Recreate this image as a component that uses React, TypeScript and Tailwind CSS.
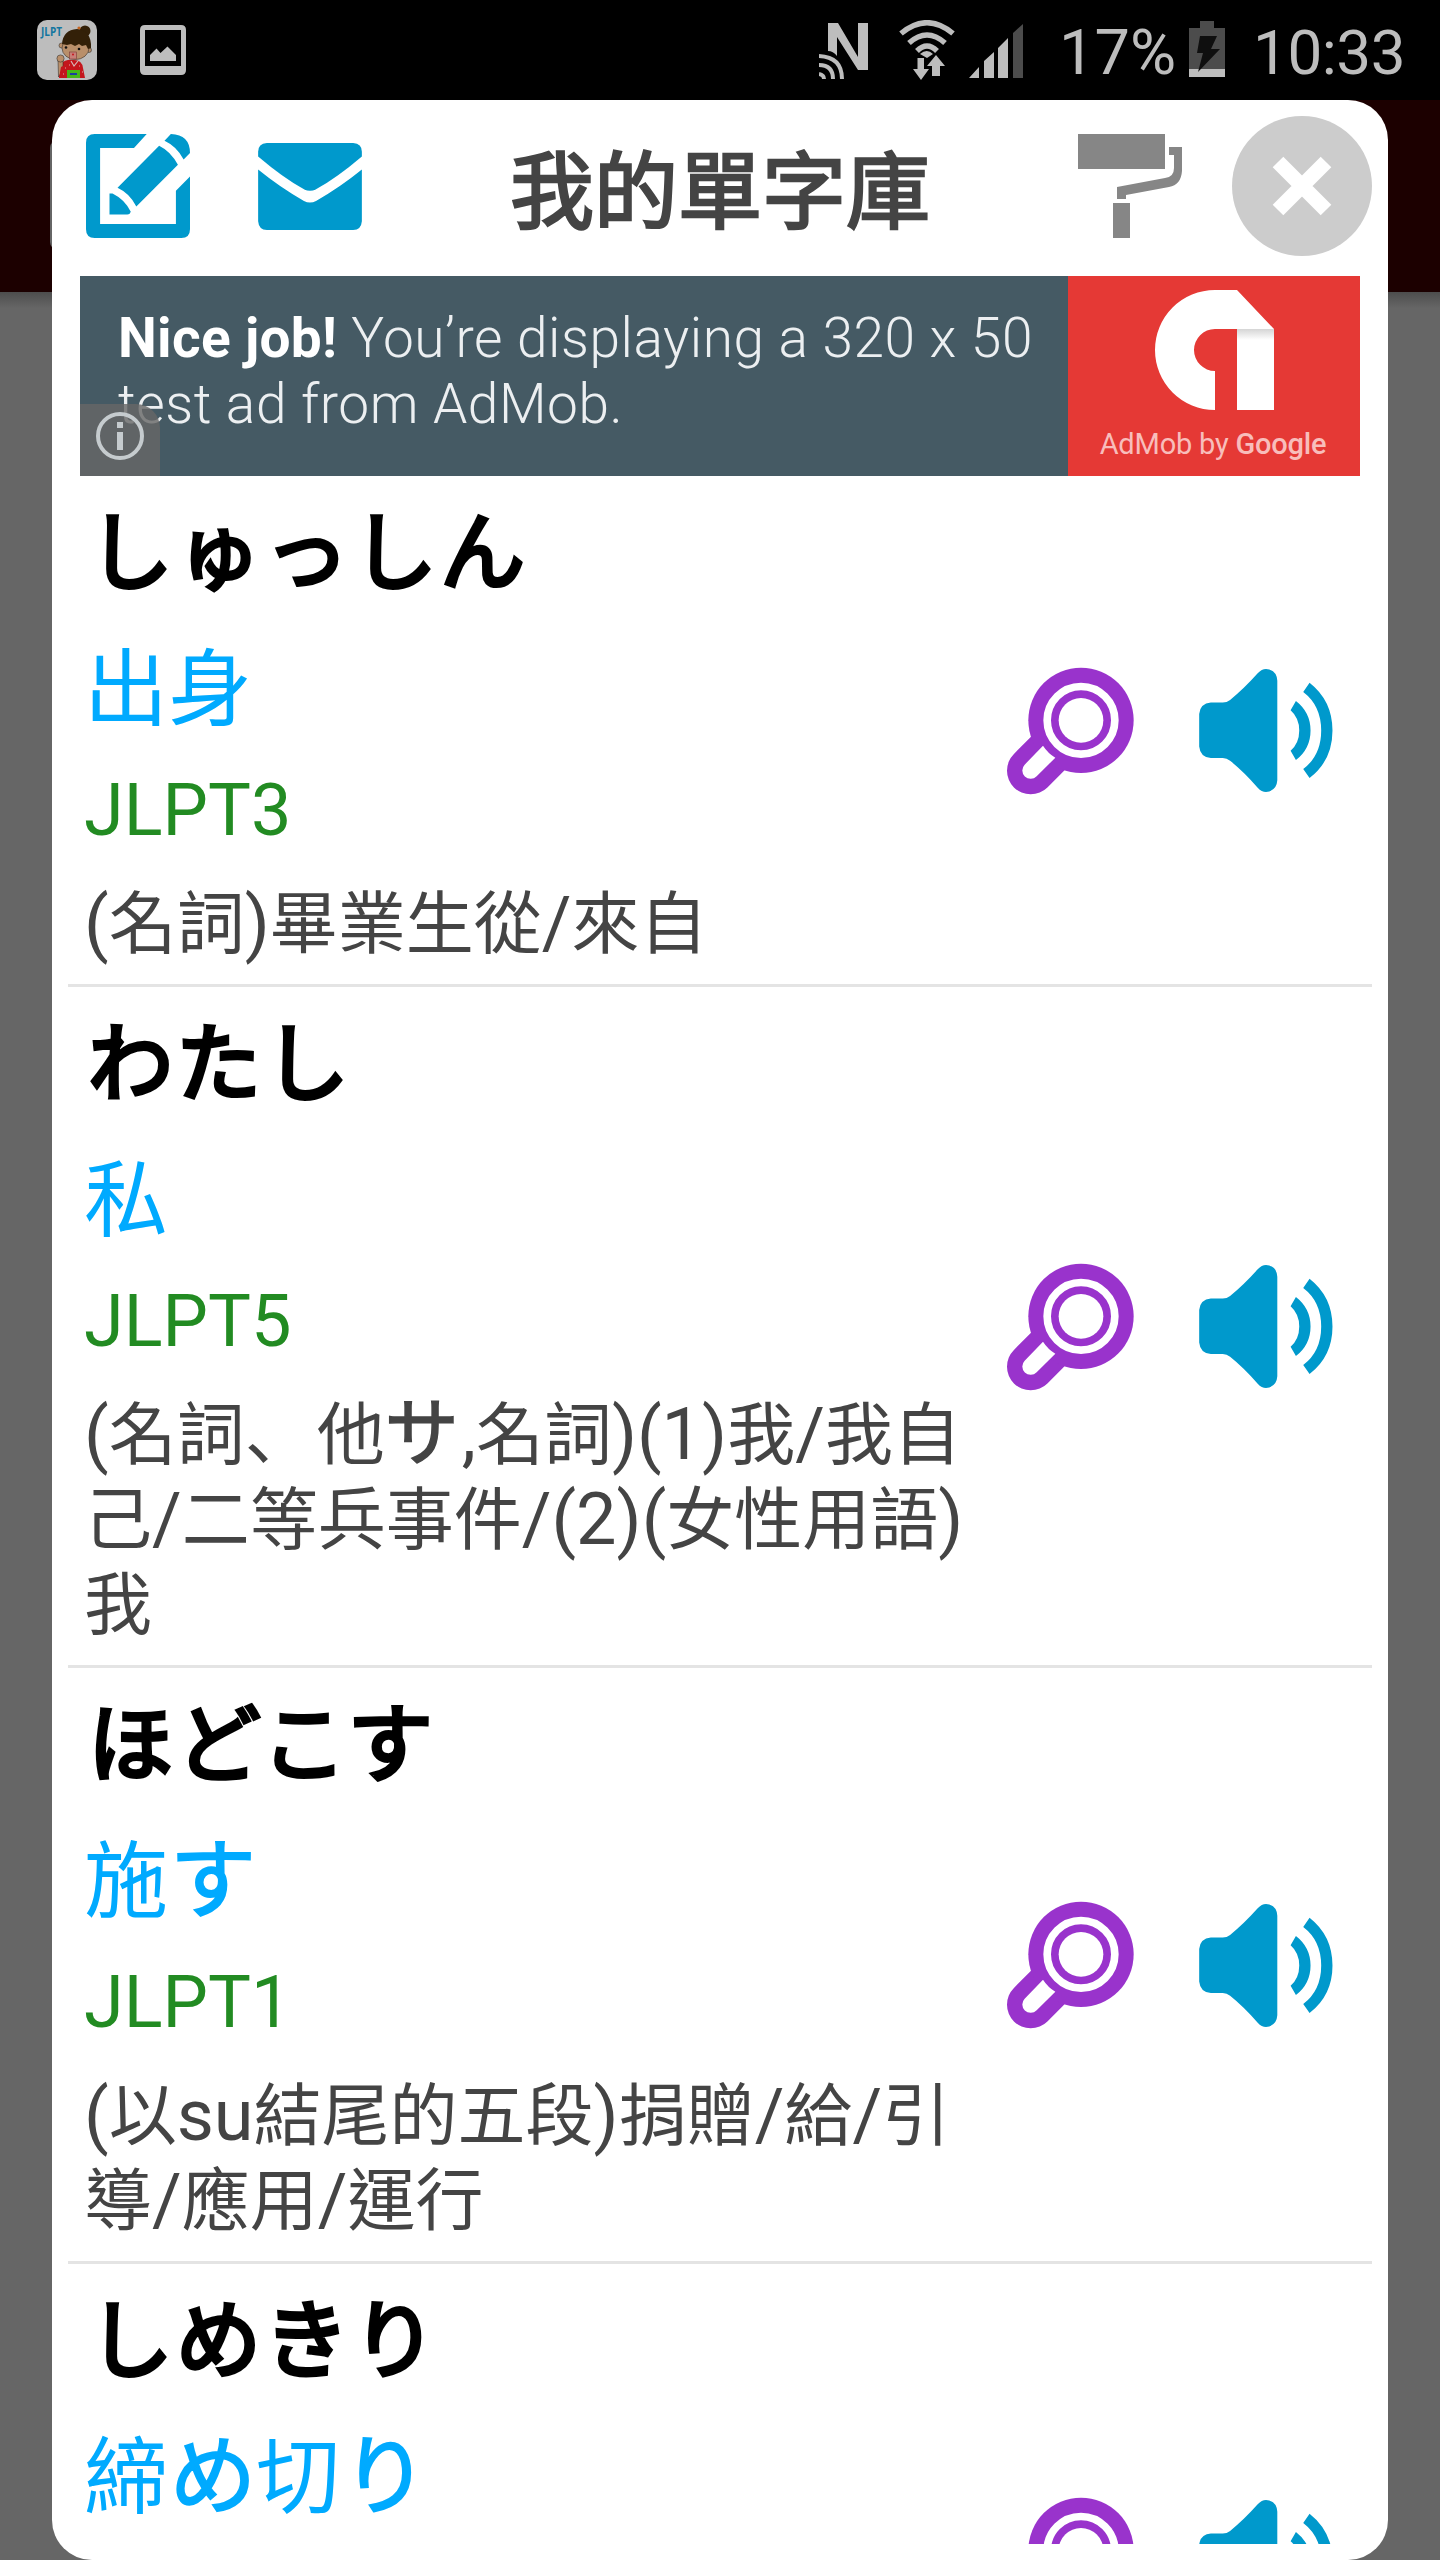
import type { ReactNode } from 'react';

interface Word {
  reading: string;
  kanji: string;
  level: string;
  // one entry per line of the definition
  meaning: string[];
}

const words: Word[] = [
  { reading: 'しゅっしん', kanji: '出身', level: 'JLPT3', meaning: ['(名詞)畢業生從/來自'] },
  {
    reading: 'わたし',
    kanji: '私',
    level: 'JLPT5',
    meaning: ['(名詞、他サ,名詞)(1)我/我自', '己/二等兵事件/(2)(女性用語)', '我'],
  },
  {
    reading: 'ほどこす',
    kanji: '施す',
    level: 'JLPT1',
    meaning: ['(以su結尾的五段)捐贈/給/引', '導/應用/運行'],
  },
  { reading: 'しめきり', kanji: '締め切り', level: '', meaning: ['', ''] },
];

// Splits a string in latin, kana (with the ideographic comma) and han runs
function runs(text: string) {
  return text.match(/[\x20-\x7e]+|[\u3001\u3040-\u30ff]+|[^\x20-\x7e\u3001\u3040-\u30ff]+/g) ?? [];
}

const isLatin = (s: string) => /^[\x20-\x7e]/.test(s);
const isKana = (s: string) => /^[\u3040-\u30ff]/.test(s);

function Kanji({ text }: { text: string }) {
  return (
    <div className="h-[108px] whitespace-nowrap text-[84px] leading-[108px] text-[#00aaff]">
      {runs(text).map((run, i) =>
        isKana(run) ? (
          <span key={i} className="ml-0.5 -mr-0.5 font-['Noto_Sans_CJK_JP',sans-serif] text-[86px] leading-none tracking-[2px] [-webkit-text-stroke:2px_#00aaff]">
            {run}
          </span>
        ) : (
          <span key={i}>{run}</span>
        ),
      )}
    </div>
  );
}

function Meaning({ text }: { text: string }) {
  return (
    <div className="h-[85px] whitespace-nowrap text-[68px] leading-[85px] text-[#444444]">
      {runs(text).map((run, i) => {
        if (isLatin(run)) {
          return (
            <span key={i} className="font-[Roboto,sans-serif] text-[72px] leading-none">
              {run}
            </span>
          );
        }
        if (isKana(run)) {
          return (
            <span key={i} className="font-['Noto_Sans_CJK_JP',sans-serif] text-[74px] leading-none tracking-[3px] [-webkit-text-stroke:1.5px_#444444]">
              {run}
            </span>
          );
        }
        if (run === '、') {
          return (
            <span key={i} className="font-['Noto_Sans_CJK_JP',sans-serif] tracking-[4px]">
              {run}
            </span>
          );
        }
        return <span key={i}>{run}</span>;
      })}
    </div>
  );
}

function SearchIcon() {
  return (
    <svg viewBox="82 82 381 382" className="h-32 w-[127px]">
      <path d="M153 392 L250 295" stroke="#9933cc" strokeWidth="142" strokeLinecap="round" />
      <circle cx="304" cy="241" r="158" fill="#9933cc" />
      <circle cx="304" cy="241" r="101.5" fill="none" stroke="#fff" strokeWidth="23" />
      <circle cx="304" cy="241" r="67" fill="#fff" />
      <path d="M190 317 Q205 340 227 353 L171 409 A25 25 0 0 1 135 374 Z" fill="#fff" />
    </svg>
  );
}

function SpeakerIcon() {
  return (
    <svg viewBox="657 85 402 370" className="h-[123px] w-[134px]" fill="#0099cc">
      <path d="M692 186 H728 Q740 186 750 178 Q790 146 833 98 Q845 85 858 85 Q890 88 892 120 V420 Q890 452 858 455 Q845 455 833 442 Q790 393 750 361 Q740 353 728 353 H692 Q660 350 657 318 V220 Q660 189 692 186Z" />
      <path d="M948 181 Q992 215 992 270 Q992 325 948 359 L932 331 Q958 308 958 270 Q958 232 932 209Z" />
      <path d="M989 126 Q1058 180 1058 270 Q1058 360 989 413 L970 386 Q1024 345 1024 270 Q1024 195 970 154Z" />
    </svg>
  );
}

function WordRow({ word }: { word: Word }) {
  return (
    <div className="flex shrink-0 items-center border-b-[3px] border-[#e4e4e4] pt-4 pr-[39px] pb-[18px] pl-4">
      <div className="flex flex-1 flex-col">
        <div className="h-[108px] pl-1 font-['Noto_Sans_CJK_JP',sans-serif] text-[85px] leading-[108px] tracking-[3px] text-black [-webkit-text-stroke:4px_#000]">
          {word.reading}
        </div>
        <div className="mt-[29px]">
          <Kanji text={word.kanji} />
        </div>
        <div className="mt-8 h-[84px] font-[Roboto,sans-serif] text-[72px] leading-[84px] text-[#228b22]">{word.level}</div>
        <div className="mt-[23px] mb-[5px]">
          {word.meaning.map((line, i) => (
            <Meaning key={i} text={line} />
          ))}
        </div>
      </div>
      <div className="flex items-center gap-[65px] pt-[3px]">
        <SearchIcon />
        <SpeakerIcon />
      </div>
    </div>
  );
}

function AppBadge() {
  return (
    <svg viewBox="0 0 60 60" className="size-[60px]">
      <rect width="60" height="60" rx="10" fill="#bdbdbd" />
      <text x="4" y="16" fontFamily="Open Sans, sans-serif" fontSize="11.5" fontWeight="700" fill="#1476a0" textLength="21" lengthAdjust="spacingAndGlyphs">
        JLPT
      </text>
      <circle cx="48" cy="11" r="5.5" fill="#332008" />
      <circle cx="42" cy="8" r="1.6" fill="#c8641e" />
      <path d="M22 58 L24 44 Q28 39 37 40 Q45 40 46 48 L48 58Z" fill="#c4161c" />
      <path d="M21.500 57 L21 40 L26 38 L26 50Z" fill="#b98f6a" stroke="#222" strokeWidth=".5" />
      <circle cx="23.500" cy="38.500" r="3.600" fill="#b98f6a" stroke="#222" strokeWidth=".5" />
      <circle cx="24.500" cy="25.500" r="2.500" fill="#b98f6a" stroke="#222" strokeWidth=".5" />
      <circle cx="52" cy="30" r="2.500" fill="#b98f6a" stroke="#222" strokeWidth=".5" />
      <ellipse cx="38.500" cy="28" rx="13.500" ry="11.500" fill="#b98f6a" stroke="#222" strokeWidth=".5" />
      <path d="M25 24 Q26 10 40 9 Q55 11 54 28 L51 29 L49 25 L45 26 L42 24 L38 26 L34 24 L30 25Z" fill="#332008" />
      <circle cx="29" cy="27.500" r="1.300" fill="#111" />
      <circle cx="42" cy="29" r="1.300" fill="#111" />
      <rect x="32.500" y="32" width="7" height="7" fill="#c97f78" stroke="#7b3b35" strokeWidth=".6" />
      <circle cx="36" cy="34.500" r="1" fill="#c4161c" />
      <path d="M34 41 L37 46 L41 41" fill="none" stroke="#d7b8b8" strokeWidth="1.200" />
      <path d="M22 58 L24 47 L28 45 L30 58Z" fill="#c4161c" />
      <path d="M28 48h1M32 45h1M42 46h1M45 52h1M26 54h1" stroke="#e0a8a8" strokeWidth="1" />
      <rect x="30" y="50" width="13" height="8" fill="#46b817" />
      <rect x="33" y="53" width="7" height="2" fill="#1b3fa0" />
    </svg>
  );
}

function StatusBar() {
  return (
    <div className="flex h-[100px] items-center bg-black pr-[35px] pl-[37px] font-[Roboto,sans-serif] text-[63px] leading-none text-[#bdbdbd]">
      <AppBadge />
      <svg viewBox="0 0 46 50" className="ml-[43px] h-[50px] w-[46px]">
        <path fillRule="evenodd" fill="#bdbdbd" d="M5 0H41Q46 0 46 5V45Q46 50 41 50H5Q0 50 0 45V5Q0 0 5 0ZM5 5V41H41V5Z" />
        <path fill="#bdbdbd" d="M10 36V30L16.500 23.500L20.500 28L27.500 21.500L36 30V36Z" />
      </svg>
      <div className="flex-1" />

      {/* NFC */}
      <svg viewBox="0 0 50 57" className="h-[57px] w-[50px]">
        <path fill="#bdbdbd" d="M9 1H19L39 35V1H49V48H39L18 15V34Q14 29 9 29Z" />
        <g fill="none" stroke="#bdbdbd" strokeWidth="4">
          <path d="M0 52Q5 53 5 57" />
          <path d="M0 43Q14 43 14 57" />
          <path d="M0 34Q23 35 23 57" />
        </g>
      </svg>

      {/* Wifi */}
      <svg viewBox="0 0 56 60" className="ml-[30px] h-[60px] w-14">
        <g fill="none" stroke="#bdbdbd" strokeWidth="5.500">
          <path d="M2 13.500Q28 -8 54 13.500" />
          <path d="M10 23Q28 7 46 23" />
          <path d="M18 31Q28 21 38 31" />
        </g>
        <path fill="#bdbdbd" d="M21 34Q28 28 34 34L28 38Z M18.500 38H25V49H30L22 60L14 49H18.500Z M33 56V46H28L37 35L46 46H41V56Z" />
      </svg>

      {/* Signal */}
      <svg viewBox="0 0 54 54" className="mt-0.5 ml-[14px] size-[54px]">
        <path fill="#bdbdbd" d="M0 54L10 43V54Z M15 54V37L25 28V54Z M29 54V24L39 14V54Z" />
        <path fill="#4c4c4c" d="M44 54V9L54 0V54Z" />
      </svg>

      <span className="mt-[5px] ml-9 w-[130px] whitespace-nowrap">17%</span>
      {/* Battery */}
      <svg viewBox="0 0 36 56" className="-mt-0.5 h-14 w-9">
        <path fill="#4c4c4c" d="M11 0H25V7H36V48H0V7H11Z" />
        <path fill="#bdbdbd" d="M0 48H36V56H0Z" />
        <path fill="#0f0f0f" d="M11 15H28L22 28H31L9 51L14 32H8Z" />
      </svg>
      <span className="mt-[5px] ml-[28px] text-[62px] tracking-[-0.5px] whitespace-nowrap">10:33</span>
    </div>
  );
}

function DialogHeader({ children }: { children: ReactNode }) {
  return (
    <div className="flex h-44 shrink-0 items-center pb-1">
      <div className="flex w-[310px] items-center gap-[68px] pl-[34px]">
        {/* Edit */}
        <svg viewBox="259 403 310 310" className="size-[104px]" fill="#0099cc">
          <path d="M285 403H440L402 445H301V671H527V572L569 530V687Q569 713 543 713H285Q259 713 259 687V429Q259 403 285 403Z" />
          <path d="M512 403Q569 405 569 460L550 479Q530 440 493 423Z" />
          <path d="M477 438Q512 455 533 495L409 619Q390 580 353 563Z" />
          <path d="M329 580H338Q375 598 392 634Q391 643 382 643H329Z" />
        </svg>
        {/* Mail */}
        <svg viewBox="775 428 310 260" className="h-[87px] w-[104px]" fill="#0099cc">
          <path d="M801 428H1059Q1085 430 1085 454V468Q1010 532 948 566Q930 575 912 566Q850 532 775 468V454Q775 430 801 428Z" />
          <path d="M775 507Q840 560 912 601Q930 610 948 601Q1020 560 1085 507V662Q1083 688 1059 688H801Q777 688 775 662Z" />
        </svg>
      </div>
      <h1 className="flex-1 text-center text-[84px] leading-none text-[#444444] [-webkit-text-stroke:2.5px_#444444]">{children}</h1>
      <div className="flex w-[310px] items-center gap-[50px]">
        {/* Paint roller */}
        <svg viewBox="1078 134 104 104" className="size-[104px]" fill="#868686">
          <path d="M1078 134H1165V169H1078Z M1113 203H1130V238H1113Z" />
          <path d="M1169 147H1182V171Q1181 185 1169 187L1126 195V199H1117V187L1165 178Q1174 177 1174 168V155H1169Z" />
        </svg>
        <svg viewBox="0 0 140 140" className="size-[140px]">
          <circle cx="70" cy="70" r="70" fill="#cccccc" />
          <path d="M46 46L94 94M94 46L46 94" stroke="#fff" strokeWidth="15" />
        </svg>
      </div>
    </div>
  );
}

function AdBanner() {
  return (
    <div className="relative mx-7 flex h-[200px] shrink-0 bg-[#455a64] font-[Roboto,sans-serif]">
      <div className="flex-1 pt-[29px] pl-[38px] text-[55px] leading-[66px] font-light tracking-[0.55px] whitespace-nowrap text-[#eceff1]">
        <div>
          <span className="font-bold tracking-[0.3px] text-white">Nice job!</span> You’re displaying a 320 x 50
        </div>
        <div>test ad from AdMob.</div>
      </div>
      <div className="flex w-[292px] flex-col items-center bg-[#e53935] pt-[14px]">
        <svg viewBox="1154 290 119 120" className="h-[120px] w-[119px]">
          <path fill="#fff" d="M1214 290H1236L1273 329V410H1236V329H1214A21 21 0 0 0 1214 371V410A60 60 0 0 1 1214 290Z" />
          <path fill="url(#fold)" d="M1236 329H1273V340H1236Z" />
          <defs>
            <linearGradient id="fold" x1="0" y1="0" x2="0" y2="1">
              <stop offset="0" stopColor="#d5d5d5" />
              <stop offset="1" stopColor="#ffffff" />
            </linearGradient>
          </defs>
        </svg>
        <div className="mt-4 pr-0.5 text-[29px] leading-[36px] tracking-[-0.2px] whitespace-nowrap text-[#f8bdbb]">
          AdMob by <span className="font-medium">Google</span>
        </div>
      </div>
      {/* Ad choices badge */}
      <div className="absolute bottom-0 left-0 h-[72px] w-20 rounded-tr-3xl bg-[#666666]/80 pt-2 pl-4">
        <svg viewBox="0 0 48 48" className="size-12" fill="none" stroke="#c5cbce">
          <circle cx="24" cy="24" r="22" strokeWidth="4" />
          <path d="M24 20V38M24 10V16" strokeWidth="6" />
        </svg>
      </div>
    </div>
  );
}

export default function App() {
  return (
    <div className="h-[2560px] w-[1440px] overflow-hidden bg-[#666666] font-['Noto_Sans_CJK_TC',sans-serif]">
      <StatusBar />
      <div className="relative h-[2460px]">
        {/* Toolbar of the dimmed screen behind the dialog */}
        <div className="absolute inset-x-0 top-0 h-48 bg-[#1c0000]" />
        <div className="absolute inset-x-0 top-48 h-4 bg-gradient-to-b from-[#4d4d4d] to-[#666666]" />
        <div className="absolute top-10 left-[50px] h-[110px] w-4 rounded-lg bg-[#666666]" />

        <div className="relative mx-[52px] flex h-full flex-col overflow-hidden rounded-[40px] bg-white pb-4">
          <DialogHeader>我的單字庫</DialogHeader>
          <AdBanner />
          <div className="mx-4 flex min-h-0 flex-1 flex-col overflow-hidden">
            {words.map((word) => (
              <WordRow key={word.reading} word={word} />
            ))}
          </div>
        </div>
      </div>
    </div>
  );
}
